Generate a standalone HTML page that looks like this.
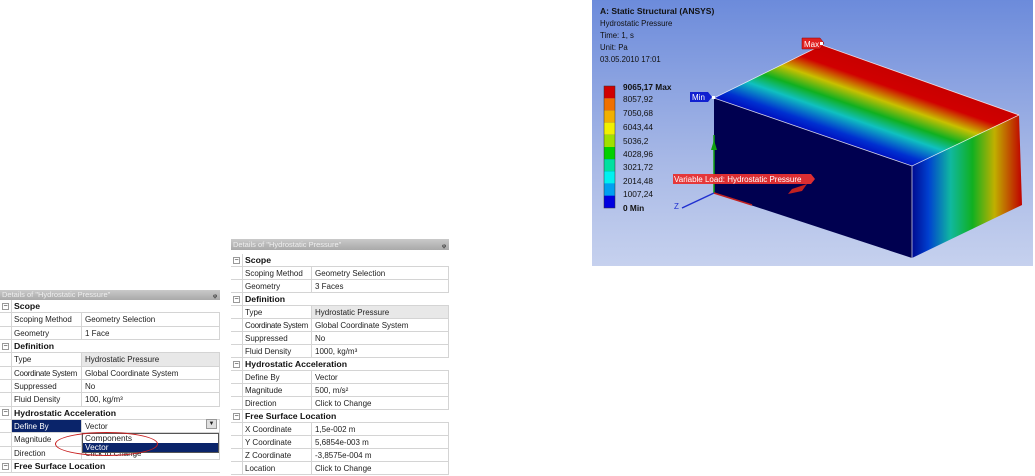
<!DOCTYPE html>
<html><head><meta charset="utf-8"><style>
*{margin:0;padding:0;box-sizing:border-box}
body{width:1035px;height:476px;background:#fff;position:relative;overflow:hidden;font-family:"Liberation Sans",sans-serif;font-size:8px;color:#222}
.p{position:absolute;background:#fff}
.hd{position:absolute;left:0;right:0;top:0;background:linear-gradient(#c9c9c9,#a9a9a9);color:#eee;font-size:7.5px;padding-left:2px;line-height:10px;height:10px}
.hd b{position:absolute;right:3px;top:0;color:#333;font-size:8px}
.r{position:absolute;left:0;right:0;border-bottom:1px solid #d4d4d4}
.r .l{position:absolute;top:0;bottom:0;border-left:1px solid #d4d4d4;border-right:1px solid #d4d4d4;padding-left:2px;white-space:nowrap;overflow:hidden}
.r .v{position:absolute;top:0;bottom:0;right:0;border-right:1px solid #d4d4d4;padding-left:3px;white-space:nowrap;overflow:hidden}
.g{font-weight:bold;font-size:8.7px;color:#111}
.g .l{border-right:none;right:0}
.ex{position:absolute;left:2px;width:7px;height:7px;border:1px solid #999;font-size:7px;line-height:5px;text-align:center;color:#666}
.vp{position:absolute;left:592px;top:0;width:441px;height:266px;background:linear-gradient(#6c8bdb,#a7b8e6 60%,#c6d1ee);overflow:hidden;font-family:"Liberation Sans",sans-serif}
.vp .t{position:absolute;left:8px;font-size:7.8px;color:#111}
</style></head><body>

<div class="p" style="left:0;top:290px;width:220px;height:186px">
<div class="hd">Details of "Hydrostatic Pressure"<b>ᵩ</b></div>
</div>
<div id="L"></div>

<div class="p" style="left:231px;top:239px;width:218px;height:237px">
<div class="hd" style="height:11px;line-height:11px">Details of "Hydrostatic Pressure"<b>ᵩ</b></div>
</div>
<div id="M"></div>

<script>
function build(rows,x,top,h,w,lc,vc){
 var s='';
 rows.forEach(function(r,i){
  var y=top+h*i;
  if(r[0]=='#'){
   s+='<div class="r g" style="left:'+x+'px;width:'+w+'px;top:'+y+'px;height:'+h+'px;line-height:'+h+'px;position:absolute"><span class="ex" style="top:'+(h/2-4)+'px">−</span><div class="l" style="left:'+lc+'px;border-right:none">'+r.slice(1)+'</div></div>';
  }else{
   var st=r[2]||'';
   s+='<div class="r" style="left:'+x+'px;width:'+w+'px;top:'+y+'px;height:'+h+'px;line-height:'+h+'px;position:absolute"><div class="l" style="left:'+lc+'px;width:'+(vc-lc)+'px;'+(r[3]||'')+'">'+r[0]+'</div><div class="v" style="left:'+vc+'px;'+st+'">'+r[1]+'</div></div>';
  }
 });
 return s;
}
var grey='background:#e8e8e8;';
document.getElementById('L').innerHTML=build([
 '#Scope',['Scoping Method','Geometry Selection'],['Geometry','1 Face'],
 '#Definition',['Type','Hydrostatic Pressure',grey],['<span style="letter-spacing:-.3px">Coordinate System</span>','Global Coordinate System'],['Suppressed','No'],['Fluid Density','100, kg/m³'],
 '#Hydrostatic Acceleration',['Define By','Vector','','background:#0a246a;color:#fff;'],['Magnitude',''],['Direction','Click to Change'],'#Free Surface Location'
],0,300,13.33,220,11,82);
document.getElementById('M').innerHTML=build([
 '#Scope',['Scoping Method','Geometry Selection'],['Geometry','3 Faces'],
 '#Definition',['Type','Hydrostatic Pressure',grey],['<span style="letter-spacing:-.3px">Coordinate System</span>','Global Coordinate System'],['Suppressed','No'],['Fluid Density','1000, kg/m³'],
 '#Hydrostatic Acceleration',['Define By','Vector'],['Magnitude','500, m/s²'],['Direction','Click to Change'],
 '#Free Surface Location',['X Coordinate','1,5e-002 m'],['Y Coordinate','5,6854e-003 m'],['Z Coordinate','-3,8575e-004 m'],['Location','Click to Change']
],231,254,13,218,11,81);
</script>

<div style="position:absolute;left:206px;top:419px;width:11px;height:10px;background:#e0e0e0;border:1px solid #999;font-size:6px;text-align:center;line-height:9px">▼</div>
<div style="position:absolute;left:82px;top:433px;width:137px;height:20px;border:1px solid #555;background:#fff;font-size:8.3px">
<div style="height:9px;line-height:9px;padding-left:2px">Components</div>
<div style="height:9px;line-height:9px;padding-left:2px;background:#0a246a;color:#fff">Vector</div>
</div>
<div style="position:absolute;left:55px;top:432px;width:103px;height:24px;border:1.5px solid #c81e1e;border-radius:50%"></div>

<div class="vp">
<div class="t" style="top:6px;font-weight:bold;font-size:8.5px">A: Static Structural (ANSYS)</div>
<div class="t" style="top:19px">Hydrostatic Pressure</div>
<div class="t" style="top:31px">Time: 1, s</div>
<div class="t" style="top:43px">Unit: Pa</div>
<div class="t" style="top:55px">03.05.2010 17:01</div>
<svg width="441" height="266" style="position:absolute;left:0;top:0">
<defs>
<linearGradient id="tg" gradientUnits="userSpaceOnUse" x1="221" y1="132" x2="249" y2="52">
<stop offset="0" stop-color="#0010c0"/><stop offset=".1" stop-color="#0030d0"/><stop offset=".3" stop-color="#10c0c0"/><stop offset=".45" stop-color="#10b020"/><stop offset=".62" stop-color="#c8c000"/><stop offset=".8" stop-color="#d00000"/><stop offset="1" stop-color="#c80000"/></linearGradient>
<linearGradient id="rg" x1="0" y1="0" x2="1" y2="0">
<stop offset="0" stop-color="#000a90"/><stop offset=".15" stop-color="#0040d0"/><stop offset=".35" stop-color="#10b8a0"/><stop offset=".55" stop-color="#10b020"/><stop offset=".75" stop-color="#c0b000"/><stop offset="1" stop-color="#c00000"/></linearGradient>
</defs>
<polygon points="122,98 230,45 427,115 320,166" fill="url(#tg)"/>
<polygon points="320,166 427,115 430,205 320,258" fill="url(#rg)"/>
<polygon points="122,98 320,166 320,258 122,193" fill="#000050"/>
<polyline points="122,98 230,45 427,115" fill="none" stroke="#fff" stroke-width=".8" opacity=".8"/>
<polyline points="122,98 320,166 427,115" fill="none" stroke="#fff" stroke-width=".8" opacity=".8"/>
<line x1="320" y1="166" x2="320" y2="258" stroke="#fff" stroke-width=".8" opacity=".8"/>
<line x1="122" y1="193" x2="122" y2="135" stroke="#10a010" stroke-width="1.5"/>
<polygon points="119,150 125,150 122,140" fill="#10a010"/>
<line x1="122" y1="193" x2="90" y2="208" stroke="#2030d0" stroke-width="1.5"/>
<line x1="122" y1="193" x2="160" y2="205" stroke="#c02020" stroke-width="1.5"/>
<text x="82" y="209" font-size="8" fill="#2030d0">Z</text>
<g font-size="8.3" fill="#111" font-family="Liberation Sans">
<rect x="12" y="86" width="11" height="122" fill="#0000e0"/>
<rect x="12" y="86" width="11" height="12.2" fill="#d00000"/>
<rect x="12" y="98.2" width="11" height="12.2" fill="#f07000"/>
<rect x="12" y="110.4" width="11" height="12.2" fill="#f0b000"/>
<rect x="12" y="122.6" width="11" height="12.2" fill="#f0f000"/>
<rect x="12" y="134.8" width="11" height="12.2" fill="#a0e000"/>
<rect x="12" y="147" width="11" height="12.2" fill="#00d000"/>
<rect x="12" y="159.2" width="11" height="12.2" fill="#00e0a0"/>
<rect x="12" y="171.4" width="11" height="12.2" fill="#00f0f0"/>
<rect x="12" y="183.6" width="11" height="12.2" fill="#00a0f0"/>
<rect x="12" y="195.8" width="11" height="12.2" fill="#0000e0"/>
<rect x="12" y="86" width="11" height="122" fill="none" stroke="#333" stroke-width=".5"/>
<text x="31" y="90" font-weight="bold">9065,17 Max</text>
<text x="31" y="102">8057,92</text><text x="31" y="116">7050,68</text><text x="31" y="130">6043,44</text>
<text x="31" y="144">5036,2</text><text x="31" y="157">4028,96</text><text x="31" y="170">3021,72</text>
<text x="31" y="184">2014,48</text><text x="31" y="197">1007,24</text>
<text x="31" y="211" font-weight="bold">0 Min</text>
</g>
<path d="M210,38 H228 L232,43 L228,49 H210 Z" fill="#e02020" stroke="#800" stroke-width=".5"/>
<text x="212" y="47" font-size="8" fill="#fff">Max</text>
<rect x="228" y="42" width="3" height="3" fill="#fff"/>
<path d="M98,92 H116 L120,97 L116,102 H98 Z" fill="#1020d0"/>
<text x="100" y="100" font-size="8" fill="#fff">Min</text>
<rect x="120" y="96" width="3" height="3" fill="#fff"/>
<path d="M81,174 H219 L223,179 L219,184 H81 Z" fill="#e83030" opacity=".95"/>
<text x="82" y="182" font-size="8" fill="#fff">Variable Load: Hydrostatic Pressure</text>
<polygon points="200,189 215,184 210,191 196,194" fill="#c02020"/>
</svg>
</div>
</body></html>
